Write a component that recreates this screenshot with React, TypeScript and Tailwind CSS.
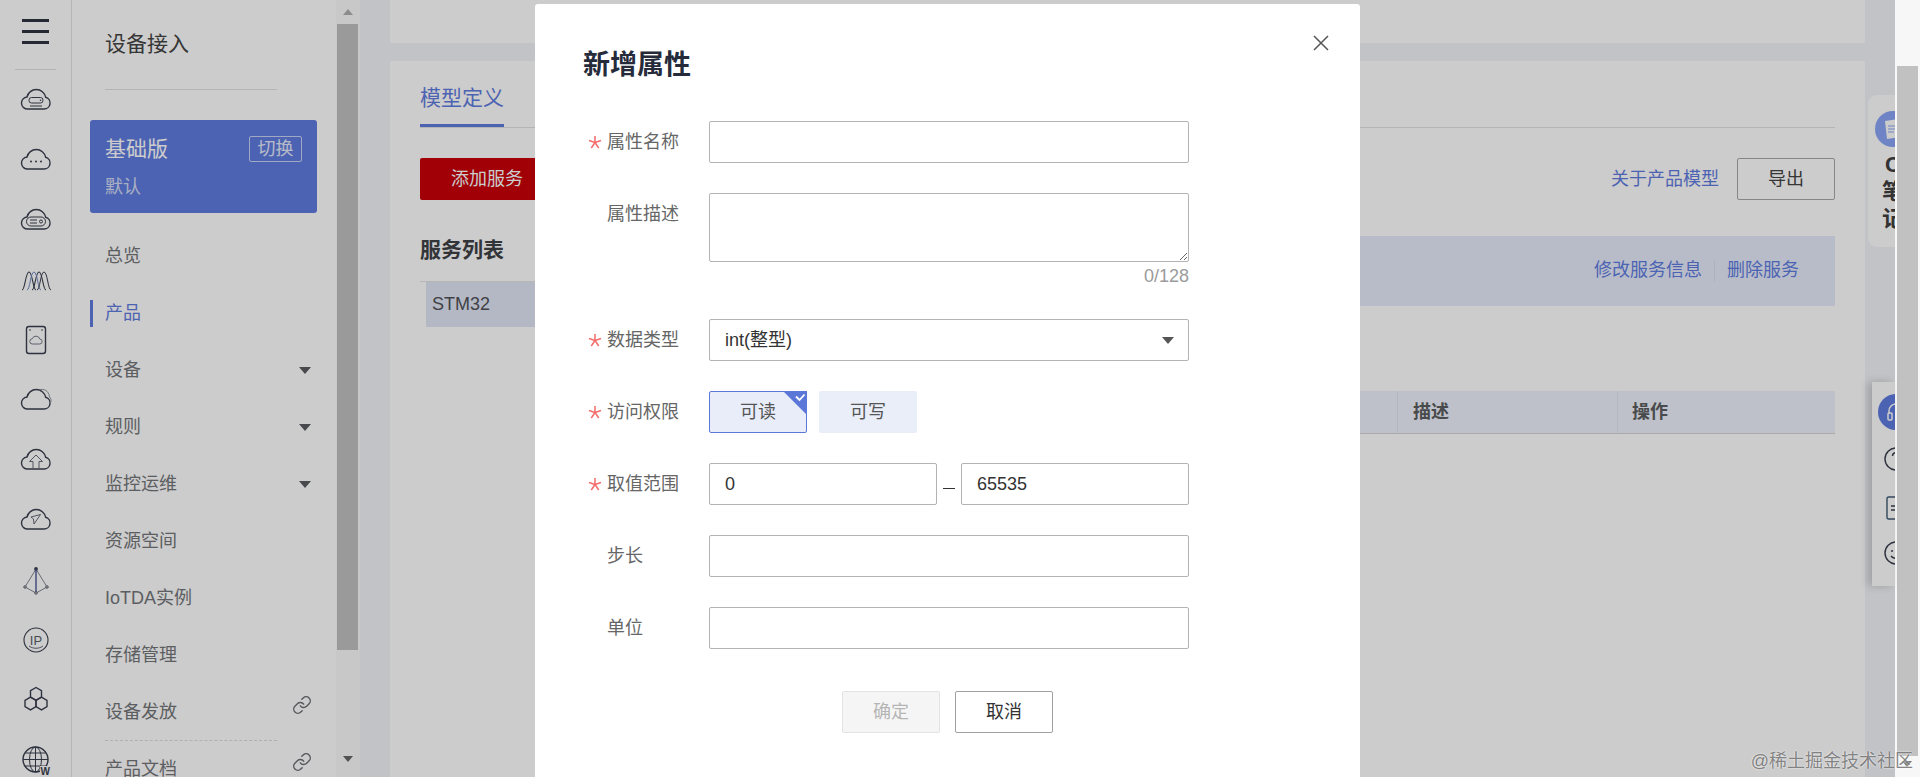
import { Link } from 'lucide-react';
import type { ReactNode } from 'react';

const CLOUD = 'M8 25h16a6 6 0 0 0 1.6-11.8A9.5 9.5 0 0 0 7 13a6 6 0 0 0 1 12z';

// Left rail icons, all on the same 32x32 box
function RailIcon({ children, cloud = true }: { children?: ReactNode; cloud?: boolean }) {
  return (
    <svg width="32" height="32" viewBox="0 0 32 32" fill="none" stroke="#3a3f4e" strokeWidth="1.4">
      {cloud && <path d={CLOUD} />}
      {children}
    </svg>
  );
}

const railIcons: ReactNode[] = [
  <RailIcon key="a">
    <rect x="9" y="13.5" width="14" height="5.5" rx="2.5" strokeWidth="1" />
    <path d="M10 22h12" strokeWidth="1" />
    <circle cx="20.5" cy="16.2" r="0.8" fill="#3a3f4e" stroke="none" />
  </RailIcon>,
  <RailIcon key="b">
    <circle cx="11" cy="17.5" r="1" fill="#3a3f4e" stroke="none" />
    <circle cx="16" cy="17.5" r="1" fill="#3a3f4e" stroke="none" />
    <circle cx="21" cy="17.5" r="1" fill="#3a3f4e" stroke="none" />
  </RailIcon>,
  <RailIcon key="c">
    <rect x="6.5" y="13" width="19" height="9" rx="4.5" strokeWidth="1" />
    <path d="M10 16h7M10 19h7" strokeWidth="1" />
    <circle cx="21" cy="17.5" r="1.5" strokeWidth="1" />
  </RailIcon>,
  <RailIcon key="d" cloud={false}>
    <path d="M2 26c3 0 3.500-18 7-18s4 18 7 18" strokeWidth="1.1" />
    <path d="M12 26c3 0 3.500-18 7-18s4 18 7 18" strokeWidth="1.1" />
    <path d="M7 26c3 0 3.500-18 7-18s4 18 7 18" stroke="#7389c6" strokeWidth="1" />
    <path d="M17 26c3 0 3.500-18 7-18s4 18 7 18" stroke="#3a3f4e" strokeWidth="1" />
  </RailIcon>,
  <RailIcon key="e" cloud={false}>
    <rect x="6.500" y="2.500" width="19" height="27" rx="2.500" />
    <circle cx="10" cy="6" r="0.8" fill="#3a3f4e" stroke="none" />
    <circle cx="22" cy="6" r="0.8" fill="#3a3f4e" stroke="none" />
    <path d="M12.500 20h7a2.500 2.500 0 0 0 .3-5 4 4 0 0 0-7.600-.2 2.600 2.600 0 0 0 .3 5.200z" strokeWidth="0.9" stroke="#666a76" />
  </RailIcon>,
  <RailIcon key="f">
    <path d="M19 6c5-2 10 1 10.500 7 1.500 1.500 2 3 1.400 5" strokeWidth="0.8" stroke="#777b86" />
  </RailIcon>,
  <RailIcon key="g">
    <path d="M16 11l-6.500 6.500H13V25h6v-7.500h3.500z" strokeWidth="1" stroke="#666a76" />
  </RailIcon>,
  <RailIcon key="h">
    <path d="M11 13l9.500-2.500L14 20l-.5-5z" strokeWidth="0.9" stroke="#555965" />
  </RailIcon>,
  <RailIcon key="i" cloud={false}>
    <circle cx="16" cy="5" r="1.900" fill="#3a3f4e" stroke="none" />
    <path d="M16 5L5 23l11 6 11-6z" strokeWidth="0.8" stroke="#666a76" />
    <path d="M16 5v24" stroke="#3d4a8c" strokeWidth="1.300" />
    <circle cx="5" cy="23" r="1.300" fill="#d0d0d0" strokeWidth="0.7" />
    <circle cx="27" cy="23" r="1.300" fill="#d0d0d0" strokeWidth="0.7" />
    <circle cx="16" cy="29" r="1.300" fill="#d0d0d0" strokeWidth="0.7" />
  </RailIcon>,
  <RailIcon key="j" cloud={false}>
    <circle cx="16" cy="16" r="12" strokeWidth="1.100" />
    <path d="M9 22c4 3 10 3 14 0" strokeWidth="0.800" />
    <text x="16" y="20.500" textAnchor="middle" fontSize="13" fill="#5a5e6a" stroke="none" fontFamily="Liberation Sans">
      IP
    </text>
  </RailIcon>,
  <RailIcon key="k" cloud={false}>
    <path d="M16 3.500l5.500 3.200v6.400L16 16.300l-5.500-3.200V6.700z" />
    <path d="M10.500 13.100l5.500 3.200v6.400l-5.500 3.200L5 22.700v-6.400z" />
    <path d="M21.500 13.100l5.500 3.200v6.400l-5.500 3.200-5.500-3.200v-6.400z" />
  </RailIcon>,
  <RailIcon key="l" cloud={false}>
    <circle cx="15.500" cy="15.500" r="12.500" />
    <ellipse cx="15.500" cy="15.500" rx="6" ry="12.500" strokeWidth="1" />
    <path d="M3 15.500h25M5 9h21M5 22h21M15.500 3v25" strokeWidth="1" />
    <rect x="20" y="22" width="12" height="10" fill="#ffffff" stroke="none" />
    <text x="20.500" y="30.500" fontSize="10" fontWeight="700" fill="#3a3f4e" stroke="none" fontFamily="Liberation Sans">
      W
    </text>
  </RailIcon>,
];

function Caret() {
  return <span className="border-x-[6px] border-t-[7px] border-x-transparent border-t-[#5b5c60]" />;
}

type NavItem = { label: string; caret?: boolean; link?: boolean; active?: boolean; dashed?: boolean };

const navItems: NavItem[] = [
  { label: '总览' },
  { label: '产品', active: true },
  { label: '设备', caret: true },
  { label: '规则', caret: true },
  { label: '监控运维', caret: true },
  { label: '资源空间' },
  { label: 'IoTDA实例' },
  { label: '存储管理' },
  { label: '设备发放', link: true, dashed: true },
  { label: '产品文档', link: true },
];

function Sidebar() {
  return (
    <aside className="w-[264px] shrink-0 bg-white pl-[18px] pr-[19px]">
      <div className="ml-[15px] flex h-[90px] w-[172px] items-center border-b border-[#e2e2e2] pb-px text-[21px] leading-7 text-[#444444]">
        设备接入
      </div>
      <div className="mt-[30px] h-[93px] rounded-[3px] bg-[#5f7ce0] pl-[15px] pr-[15px] pt-4 text-white">
        <div className="flex h-[26px] items-center justify-between">
          <span className="text-[21px]">基础版</span>
          <span className="flex h-[26px] w-[53px] items-center justify-center rounded-[2px] border border-[#c8d3f5] text-[18px] text-[#e4e9fa]">
            切换
          </span>
        </div>
        <div className="mt-[13px] text-[18px] leading-6 text-[#d5dcf5]">默认</div>
      </div>
      <nav className="mt-[15px] text-[18px] text-[#74767a]">
        {navItems.map((item) => (
          <div
            key={item.label}
            className={`relative flex h-[57px] items-center justify-between pl-[15px] pr-[6px] ${
              item.active ? 'text-[#5f7ce0]' : ''
            }`}
          >
            {item.active && <span className="absolute left-0 top-[15px] h-[27px] w-[3px] bg-[#5f7ce0]" />}
            <span>{item.label}</span>
            {item.caret && <Caret />}
            {item.link && <Link size={20} strokeWidth={1.7} className="-mr-px -mt-[16px] text-[#6d6f74]" />}
            {item.dashed && (
              <span className="absolute bottom-0 left-[15px] w-[172px] border-b border-dashed border-[#dcdcdc]" />
            )}
          </div>
        ))}
      </nav>
    </aside>
  );
}

function SidebarScrollbar() {
  return (
    <div className="flex w-[24px] shrink-0 flex-col bg-[#fbfbfb] pl-px">
      <div className="flex h-[24px] w-[21px] items-center justify-center">
        <span className="border-x-[5px] border-b-[6px] border-x-transparent border-b-[#b0b0b0]" />
      </div>
      <div className="h-[626px] w-[21px] bg-[#c1c1c1]" />
      <div className="mt-auto flex h-[21px] w-[21px] items-start justify-center">
        <span className="border-x-[5px] border-t-[6px] border-x-transparent border-t-[#666666]" />
      </div>
    </div>
  );
}

function ModelCard() {
  return (
    <section className="mt-[18px] flex-1 bg-white px-[30px]">
      <div className="h-[67px] border-b border-[#e2e2e2]">
        <div className="h-[66px] w-[84px] border-b-[3px] border-[#5f7ce0] pt-[24px] text-[21px] leading-[26px] text-[#5f7ce0]">
          模型定义
        </div>
      </div>
      <div className="mt-[30px] flex h-[42px] items-center justify-between">
        <div className="flex h-[42px] w-[134px] items-center justify-center rounded-[2px] bg-[#c80008] text-[18px] text-white">
          添加服务
        </div>
        <div className="flex items-center gap-[18px] text-[18px]">
          <span className="text-[#5f7ce0]">关于产品模型</span>
          <span className="flex h-[42px] w-[98px] items-center justify-center rounded-[2px] border border-[#a8a8a8] text-[#444444]">
            导出
          </span>
        </div>
      </div>
      <div className="mt-[36px] flex">
        <div className="w-[240px] shrink-0">
          <div className="h-[28px] text-[21px] font-bold leading-[28px] text-[#3f4147]">服务列表</div>
          <div className="mt-[17px] border-t border-[#e5e5e5] pl-[6px]">
            <div className="flex h-[45px] items-center bg-[#e2e7f5] pl-[6px] text-[18px] text-[#505258]">STM32</div>
          </div>
        </div>
        <div className="flex-1">
          <div className="flex h-[70px] items-center justify-end bg-[#e7ecfb] pb-px pr-[36px] text-[18px] text-[#5f7ce0]">
            <span>修改服务信息</span>
            <span className="mx-[12px] h-[22px] w-px bg-[#dadfef]" />
            <span>删除服务</span>
          </div>
          <div className="mt-[85px] flex h-[43px] justify-end border-b border-[#d5d5d5] bg-[#eef2fc] text-[18px] font-bold text-[#5c5d60]">
            <div className="flex w-[220px] items-center border-l border-[#e2e6f2] pl-[15px]">描述</div>
            <div className="flex w-[218px] items-center border-l border-[#e2e6f2] pl-[14px]">操作</div>
          </div>
        </div>
      </div>
    </section>
  );
}

function FloatingPanels() {
  return (
    <>
      <div className="absolute right-[25px] top-[95px] h-[152px] w-[27px] overflow-hidden rounded-l-[9px] bg-white">
        <div className="w-[60px] pl-[7px] pt-[16px]">
          <div className="flex h-[36px] w-[36px] items-center justify-center rounded-full bg-[#8aa6f5]">
            <svg width="20" height="22" viewBox="0 0 20 22">
              <path d="M2 3l14-2 2 18-14 2z" fill="#ffffff" />
              <path d="M5 8h8M5 11h8M5 14h6" stroke="#8aa6f5" strokeWidth="1" />
            </svg>
          </div>
          <div className="mt-[4px] w-[36px] text-center text-[22px] font-bold leading-[27px] text-[#404040]">
            C
            <br />
            笔
            <br />
            记
          </div>
        </div>
      </div>
      <div className="absolute right-[25px] top-[382px] h-[204px] w-[23px] overflow-hidden bg-white shadow-[-4px_0_8px_rgba(0,0,0,0.18)]">
        <div className="flex w-[60px] flex-col pl-[6px] pt-[12px]">
          <div className="flex h-[36px] w-[36px] items-center justify-center rounded-full bg-[#5f7ce0]">
            <svg width="22" height="22" viewBox="0 0 22 22" fill="none" stroke="#ffffff" strokeWidth="1.5">
              <path d="M4 13V10a7 7 0 0 1 14 0v3" />
              <rect x="3" y="12" width="4" height="7" rx="1" />
              <rect x="15" y="12" width="4" height="7" rx="1" />
            </svg>
          </div>
          <svg className="ml-[6px] mt-[17px]" width="24" height="24" viewBox="0 0 24 24" fill="none" stroke="#3a3f4e" strokeWidth="1.4">
            <circle cx="12" cy="12" r="11" />
            <path d="M8.500 9a3.500 3.500 0 1 1 5 3.200c-1 .5-1.500 1-1.500 2.300" />
          </svg>
          <svg className="ml-[8px] mt-[25px]" width="22" height="24" viewBox="0 0 22 24" fill="none" stroke="#3f5a72" strokeWidth="1.4">
            <rect x="1" y="1" width="20" height="22" rx="1.500" />
            <path d="M5 10h8M5 14h8" stroke="#3a3f4e" />
          </svg>
          <svg className="ml-[6px] mt-[21px]" width="24" height="24" viewBox="0 0 24 24" fill="none" stroke="#3a3f4e" strokeWidth="1.4">
            <circle cx="12" cy="12" r="11" />
            <circle cx="8" cy="10" r="1" fill="#3a3f4e" stroke="none" />
            <path d="M7 15c2 3 7 3 10 0" />
          </svg>
        </div>
      </div>
    </>
  );
}

function Star() {
  return (
    <svg className="ml-[5px] shrink-0" width="14" height="14" viewBox="0 0 14 14" stroke="#f46c6c" strokeWidth="1.500">
      <path d="M7 1v6.500M7 7.500L1 5.500M7 7.500l6-2M7 7.500L3.300 13M7 7.500l3.700 5.500" />
    </svg>
  );
}

function Field({
  label,
  required,
  top,
  children,
}: {
  label: string;
  required?: boolean;
  top?: boolean;
  children: ReactNode;
}) {
  return (
    <div className={`flex ${top ? 'items-start' : 'items-center'}`}>
      <div className={`flex w-[126px] shrink-0 items-center text-[18px] leading-6 text-[#666666] ${top ? 'pt-[9px]' : ''}`}>
        <span className="flex w-[24px] shrink-0 items-center">{required && <Star />}</span>
        {label}
      </div>
      {children}
    </div>
  );
}

const inputClass =
  'h-[42px] rounded-[2px] border border-[#b3b3b3] bg-white px-[15px] text-[18px] text-[#333333] outline-none';

function Modal() {
  return (
    <div className="absolute bottom-0 left-[535px] top-[4px] w-[825px] rounded-t-[3px] bg-white px-[48px]">
      <svg className="absolute right-[31px] top-[31px]" width="16" height="16" viewBox="0 0 16 16" stroke="#555555" strokeWidth="1.500">
        <path d="M1 1l14 14M15 1L1 15" />
      </svg>
      <h2 className="h-[117px] pt-[44px] text-[27px] font-bold leading-[34px] text-[#252b3a]">新增属性</h2>
      <div className="flex flex-col">
        <Field label="属性名称" required>
          <input readOnly className={`${inputClass} w-[480px]`} />
        </Field>
        <div className="mt-[30px]">
          <Field label="属性描述" top>
            <textarea readOnly className="block h-[69px] w-[480px] rounded-[2px] border border-[#b3b3b3] bg-white outline-none" />
          </Field>
        </div>
        <div className="h-[29px] w-[606px] text-right text-[18px] leading-[29px] text-[#9b9b9b]">0/128</div>
        <div className="mt-[28px]">
          <Field label="数据类型" required>
            <div className={`${inputClass} flex w-[480px] items-center justify-between pr-[14px]`}>
              int(整型)
              <span className="border-x-[6px] border-t-[7px] border-x-transparent border-t-[#555555]" />
            </div>
          </Field>
        </div>
        <div className="mt-[30px]">
          <Field label="访问权限" required>
            <div className="flex gap-[12px] text-[18px] text-[#555555]">
              <div className="relative flex h-[42px] w-[98px] items-center justify-center rounded-[2px] border border-[#5b78d8] bg-[#e8edf9]">
                可读
                <svg className="absolute -right-px -top-px" width="24" height="24" viewBox="0 0 24 24" fill="none">
                  <path d="M0 0h24v24z" fill="#5b78d8" />
                  <path d="M13 5.500l3.500 3.500 5-5.500" stroke="#ffffff" strokeWidth="1.800" />
                </svg>
              </div>
              <div className="flex h-[42px] w-[98px] items-center justify-center rounded-[2px] bg-[#e9eef9]">可写</div>
            </div>
          </Field>
        </div>
        <div className="mt-[30px]">
          <Field label="取值范围" required>
            <div className="flex w-[480px] items-center justify-between">
              <input readOnly value="0" className={`${inputClass} w-[228px]`} />
              <span className="mt-[8px] h-px w-[12px] bg-[#333333]" />
              <input readOnly value="65535" className={`${inputClass} w-[228px]`} />
            </div>
          </Field>
        </div>
        <div className="mt-[30px]">
          <Field label="步长">
            <input readOnly className={`${inputClass} w-[480px]`} />
          </Field>
        </div>
        <div className="mt-[30px]">
          <Field label="单位">
            <input readOnly className={`${inputClass} w-[480px]`} />
          </Field>
        </div>
        <div className="mt-[42px] flex gap-[15px] pl-[259px] text-[18px]">
          <div className="flex h-[42px] w-[98px] items-center justify-center rounded-[2px] border border-[#e3e3e3] bg-[#f5f5f5] text-[#b5b5b5]">
            确定
          </div>
          <div className="flex h-[42px] w-[98px] items-center justify-center rounded-[2px] border border-[#a0a0a0] text-[#333333]">
            取消
          </div>
        </div>
      </div>
    </div>
  );
}

export default function App() {
  return (
    <div className="relative flex h-[777px] w-[1920px] overflow-hidden bg-white font-['Liberation_Sans','Noto_Sans_CJK_SC',sans-serif]">
      <div className="flex w-[72px] shrink-0 flex-col overflow-hidden border-r border-[#e2e3e5] bg-white">
        <div className="flex h-[69px] shrink-0 flex-col items-center justify-center gap-[8px] pb-[6px]">
          <span className="h-[3px] w-[27px] bg-[#2f3442]" />
          <span className="h-[3px] w-[27px] bg-[#2f3442]" />
          <span className="h-[3px] w-[27px] bg-[#2f3442]" />
        </div>
        <div className="mx-[15px] h-px shrink-0 bg-[#e0e0e0]" />
        {railIcons.map((icon, i) => (
          <div key={i} className="flex h-[60px] shrink-0 items-center justify-center">
            {icon}
          </div>
        ))}
      </div>
      <Sidebar />
      <SidebarScrollbar />
      <main className="flex w-[1535px] shrink-0 flex-col bg-[#f2f4f8] px-[30px]">
        <div className="h-[43px] shrink-0 bg-white" />
        <ModelCard />
      </main>

      <FloatingPanels />

      {/* page mask, the page scrollbar stays out of it */}
      <div className="absolute bottom-0 left-0 right-[25px] top-0 bg-black/20" />

      <div className="flex w-[25px] shrink-0 flex-col bg-[#f7f7f7] pl-[2px]">
        <div className="mt-[66px] h-[690px] w-[21px] bg-[#c1c1c1]" />
        <div className="ml-[5px] mt-[5px] w-0 border-x-[5px] border-t-[6px] border-x-transparent border-t-[#777777]" />
      </div>

      <Modal />

      <div className="absolute right-[7px] top-[749px] text-[18px] leading-6 text-[#666666]/80 [text-shadow:0_0_2px_#ffffff]">
        @稀土掘金技术社区
      </div>
    </div>
  );
}
